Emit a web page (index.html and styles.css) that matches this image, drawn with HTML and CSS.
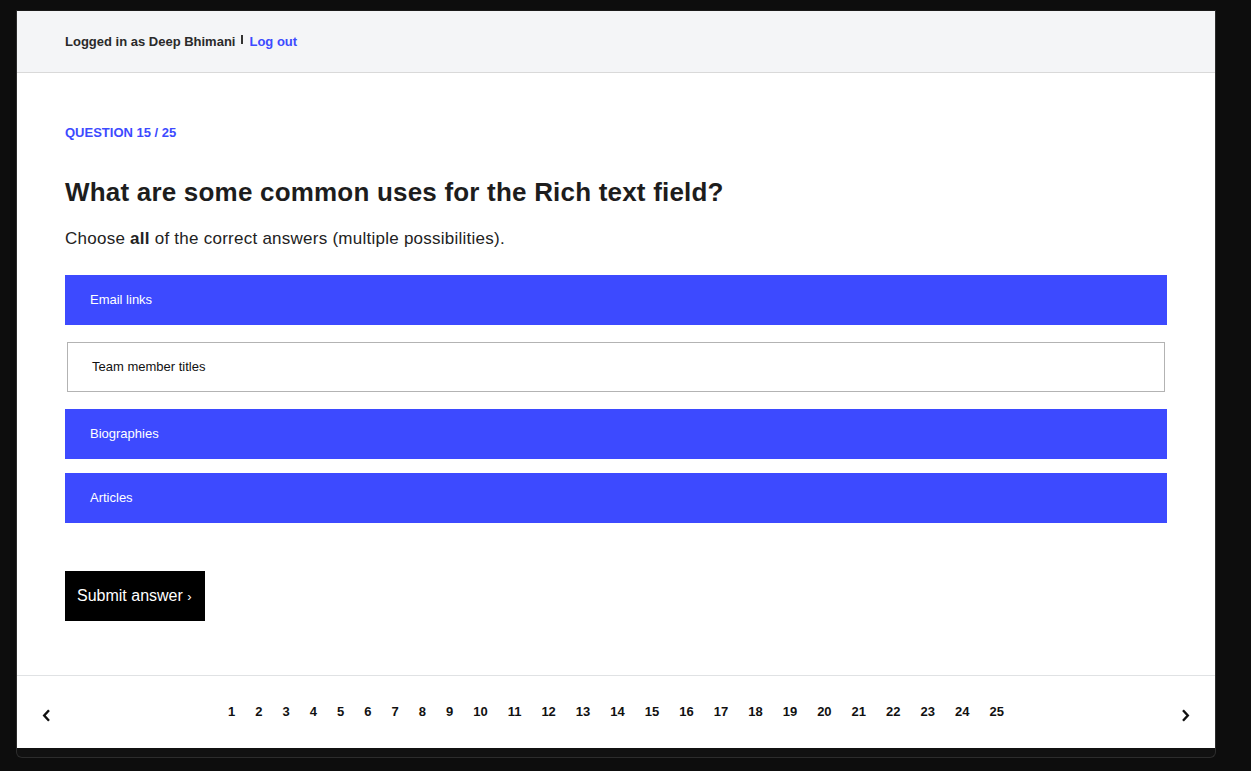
FILE: index.html
```html
<!DOCTYPE html>
<html lang="en">
<head>
<meta charset="utf-8">
<title>Quiz</title>
<link rel="stylesheet" href="styles.css">
</head>
<body>
<div class="window">
  <div class="page">
    <header class="topbar">
      <span class="user">Logged in as Deep Bhimani</span>
      <span class="sep"></span>
      <a class="logout" href="#">Log out</a>
    </header>
    <main class="main">
      <div class="label">QUESTION 15 / 25</div>
      <h1 class="title">What are some common uses for the Rich text field?</h1>
      <p class="hint">Choose <b>all</b> of the correct answers (multiple possibilities).</p>
      <div class="options">
        <div class="option selected">Email links</div>
        <div class="option">Team member titles</div>
        <div class="option selected">Biographies</div>
        <div class="option selected">Articles</div>
      </div>
      <button class="submit">Submit answer <span class="chev">›</span></button>
    </main>
    <footer class="pager">
      <a class="arrow" href="#"><svg width="9" height="13" viewBox="0 0 9 13"><path d="M7 1.3 L2.2 6.5 L7 11.7" fill="none" stroke="#111" stroke-width="2.4"/></svg></a>
      <nav class="nums">
        <a href="#">1</a><a href="#">2</a><a href="#">3</a><a href="#">4</a><a href="#">5</a><a href="#">6</a><a href="#">7</a><a href="#">8</a><a href="#">9</a><a href="#">10</a><a href="#">11</a><a href="#">12</a><a href="#">13</a><a href="#">14</a><a href="#">15</a><a href="#">16</a><a href="#">17</a><a href="#">18</a><a href="#">19</a><a href="#">20</a><a href="#">21</a><a href="#">22</a><a href="#">23</a><a href="#">24</a><a href="#">25</a>
      </nav>
      <a class="arrow" href="#"><svg width="9" height="13" viewBox="0 0 9 13"><path d="M2 1.3 L6.8 6.5 L2 11.7" fill="none" stroke="#111" stroke-width="2.4"/></svg></a>
    </footer>
  </div>
</div>
</body>
</html>
```

FILE: styles.css
```css
* { box-sizing: border-box; }
html, body { margin: 0; padding: 0; }
body {
  background: #0d0d0d;
  font-family: "Liberation Sans", Arial, Helvetica, sans-serif;
  color: #1d1d1d;
  height: 771px;
  overflow: hidden;
}
.window {
  margin: 10px 0 0 16px;
  width: 1200px;
  height: 748px;
  border: 1px solid #2c2c2c;
  border-top-color: #1a1a1a;
  border-radius: 0 0 6px 6px;
  background: #111;
}
.page {
  background: #fff;
  height: 737px;
  display: flex;
  flex-direction: column;
}
.topbar {
  height: 62px;
  background: #f4f5f7;
  border-bottom: 1px solid #d9d9d9;
  display: flex;
  align-items: center;
  padding: 0 48px;
  font-size: 13px;
  font-weight: bold;
  color: #2a2a2a;
}
.sep {
  display: inline-block;
  width: 2px;
  height: 9px;
  background: #333;
  margin: -4px 6px 0;
}
.logout { color: #3d4aff; text-decoration: none; }
.main {
  flex: 1;
  padding: 52px 48px 0;
}
.label {
  color: #3d4aff;
  font-size: 13px;
  font-weight: bold;
  line-height: 16px;
}
.title {
  margin: 35px 0 0;
  font-size: 26px;
  letter-spacing: 0.2px;
  line-height: 32px;
  font-weight: bold;
  color: #1d1d1d;
}
.hint {
  margin: 19px 0 0;
  font-size: 17px;
  letter-spacing: 0.25px;
  line-height: 24px;
  color: #222;
}
.options {
  margin-top: 24px;
  display: flex;
  flex-direction: column;
}
.option {
  height: 50px;
  margin: 3px 2px 17px;
  border: 1px solid #b3b3b3;
  padding: 0 0 1px 24px;
  display: flex;
  align-items: center;
  font-size: 13px;
  color: #111;
}
.option.selected {
  margin: 0 0 14px;
  border: none;
  background: #3d4aff;
  color: #fff;
  padding: 0 0 1px 25px;
}
.submit {
  margin-top: 34px;
  height: 50px;
  padding: 0 13px 0 12px;
  background: #000;
  color: #fff;
  border: none;
  font-family: inherit;
  font-size: 16px;
}
.submit .chev { font-size: 13px; }
.pager {
  height: 73px;
  border-top: 1px solid #e0e2e4;
  display: flex;
  align-items: center;
  padding: 0 25px;
}
.arrow {
  display: flex;
  width: 9px;
  padding-top: 6px;
}
.nums {
  flex: 1;
  display: flex;
  justify-content: center;
}
.nums a {
  padding: 0 10px;
  font-size: 13px;
  font-weight: bold;
  color: #111;
  text-decoration: none;
  line-height: 16px;
}
```
